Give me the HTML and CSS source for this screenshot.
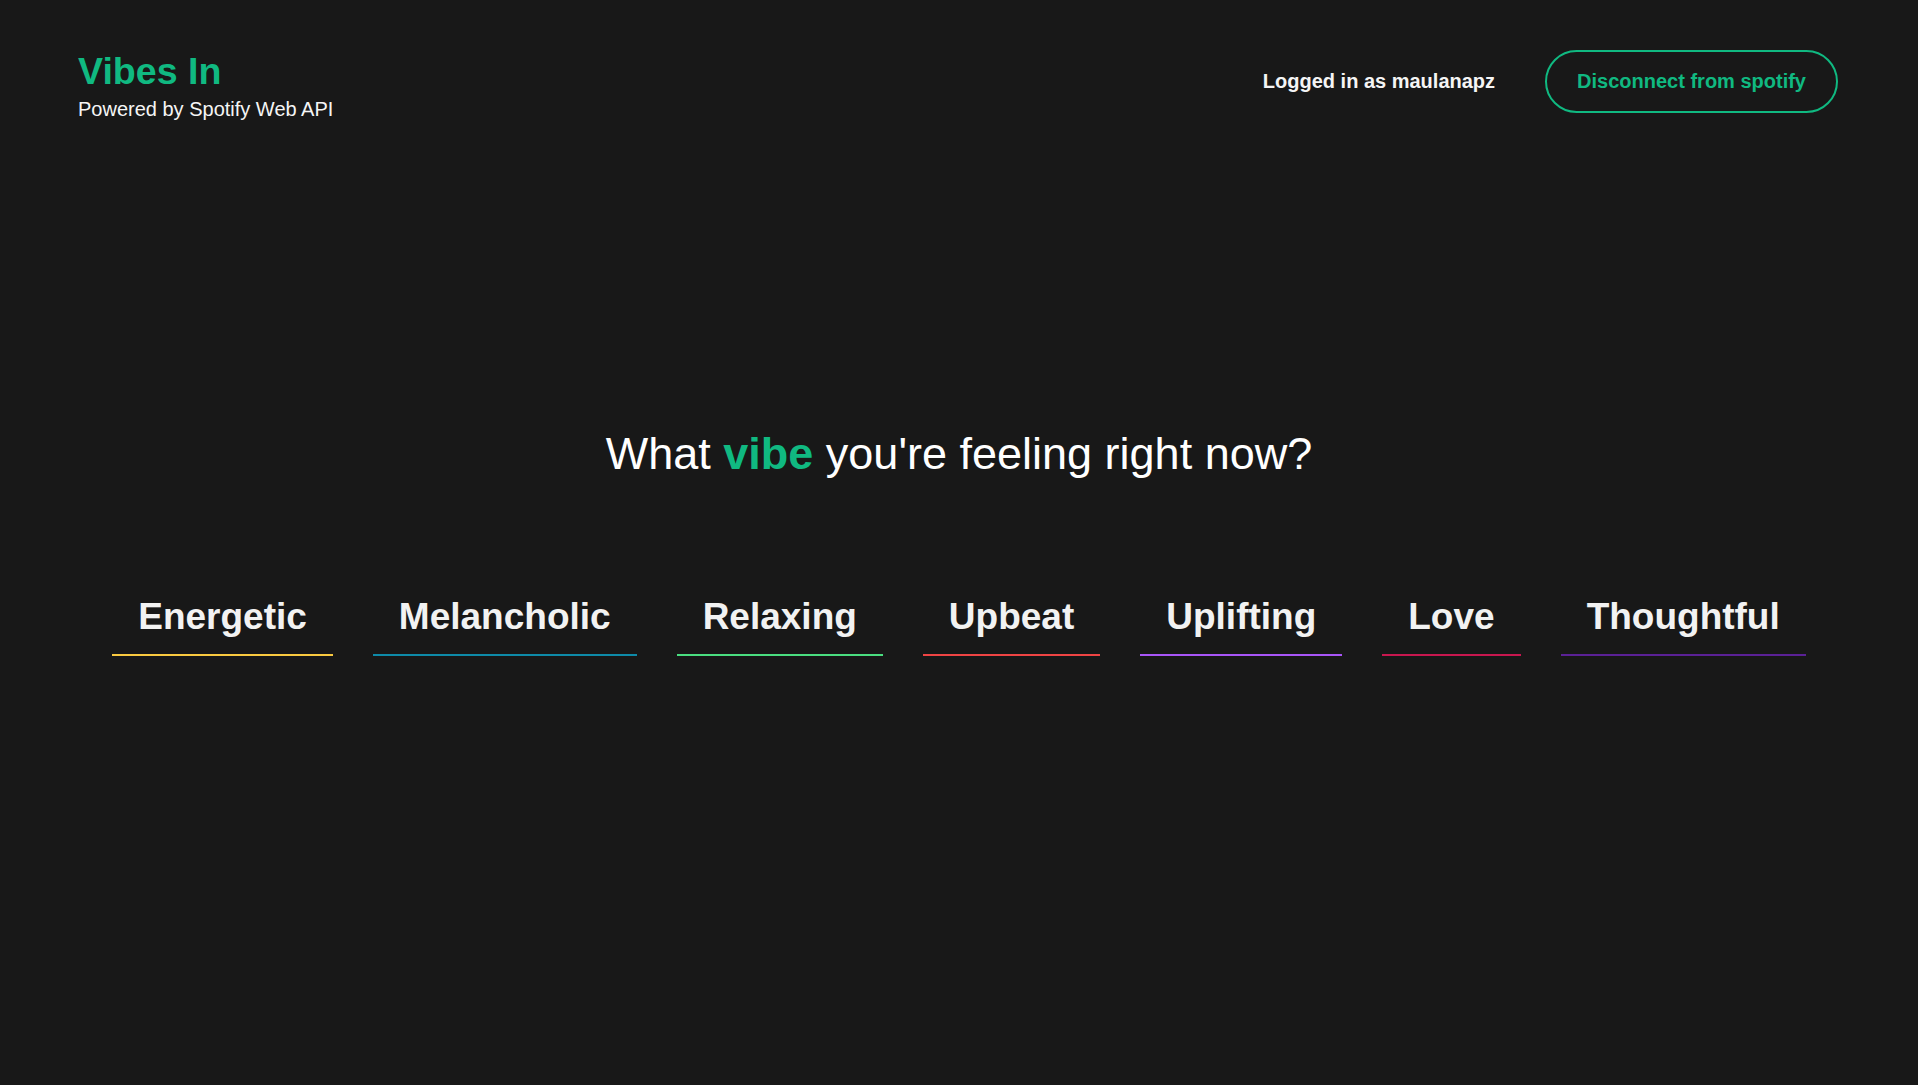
FILE: index.html
```html
<!DOCTYPE html>
<html lang="en">
<head>
<meta charset="utf-8">
<title>Vibes In</title>
<link rel="stylesheet" href="styles.css">
</head>
<body>
<header class="header">
  <div class="brand">
    <h1 class="brand-title">Vibes In</h1>
    <p class="brand-sub">Powered by Spotify Web API</p>
  </div>
  <div class="account">
    <span class="account-name">Logged in as maulanapz</span>
    <button class="disconnect">Disconnect from spotify</button>
  </div>
</header>
<main class="main">
  <h2 class="question">What <span class="accent">vibe</span> you're feeling right now?</h2>
  <ul class="moods">
    <li class="mood mood-energetic">Energetic</li>
    <li class="mood mood-melancholic">Melancholic</li>
    <li class="mood mood-relaxing">Relaxing</li>
    <li class="mood mood-upbeat">Upbeat</li>
    <li class="mood mood-uplifting">Uplifting</li>
    <li class="mood mood-love">Love</li>
    <li class="mood mood-thoughtful">Thoughtful</li>
  </ul>
</main>
</body>
</html>
```
FILE: styles.css
```css
* { box-sizing: border-box; }
html, body {
  margin: 0;
  padding: 0;
  background: #181818;
  min-height: 100vh;
}
body {
  font-family: "Liberation Sans", Arial, sans-serif;
  color: #f2f2f2;
}
.header {
  display: flex;
  justify-content: space-between;
  align-items: flex-start;
  padding: 48px 80px 0 78px;
}
.brand-title {
  margin: 0;
  font-size: 37.6px;
  line-height: 46px;
  font-weight: 700;
  color: #10b981;
}
.brand-sub {
  margin: 3px 0 0;
  font-size: 20px;
  line-height: 24px;
  color: #f5f5f5;
}
.account {
  display: flex;
  align-items: center;
  margin-top: 2px;
  gap: 50px;
}
.account-name {
  font-size: 20px;
  font-weight: 700;
  line-height: 23px;
  color: #f5f5f5;
}
.disconnect {
  font-family: inherit;
  font-size: 20px;
  font-weight: 700;
  line-height: 23px;
  color: #10b981;
  background: transparent;
  border: 2px solid #10b981;
  border-radius: 999px;
  padding: 18px 30px;
  cursor: pointer;
}
.main {
  padding-top: 305px;
  display: flex;
  flex-direction: column;
  align-items: center;
}
.question {
  margin: 0;
  font-size: 45px;
  line-height: 55px;
  font-weight: 400;
  color: #ffffff;
}
.accent {
  font-weight: 700;
  color: #10b981;
}
.moods {
  list-style: none;
  margin: 114px 0 0;
  padding: 0;
  display: flex;
  justify-content: center;
  gap: 40px;
}
.mood {
  font-size: 37px;
  line-height: 1.2;
  font-weight: 700;
  color: #f2f2f2;
  padding: 0 26px 15px;
  border-bottom: 2px solid transparent;
  cursor: pointer;
}
.mood-energetic { border-bottom-color: #f9c940; }
.mood-melancholic { border-bottom-color: #0e8aa8; }
.mood-relaxing { border-bottom-color: #4ade80; }
.mood-upbeat { border-bottom-color: #ef4444; }
.mood-uplifting { border-bottom-color: #a855f7; }
.mood-love { border-bottom-color: #c8174f; }
.mood-thoughtful { border-bottom-color: #5b2196; }
```
